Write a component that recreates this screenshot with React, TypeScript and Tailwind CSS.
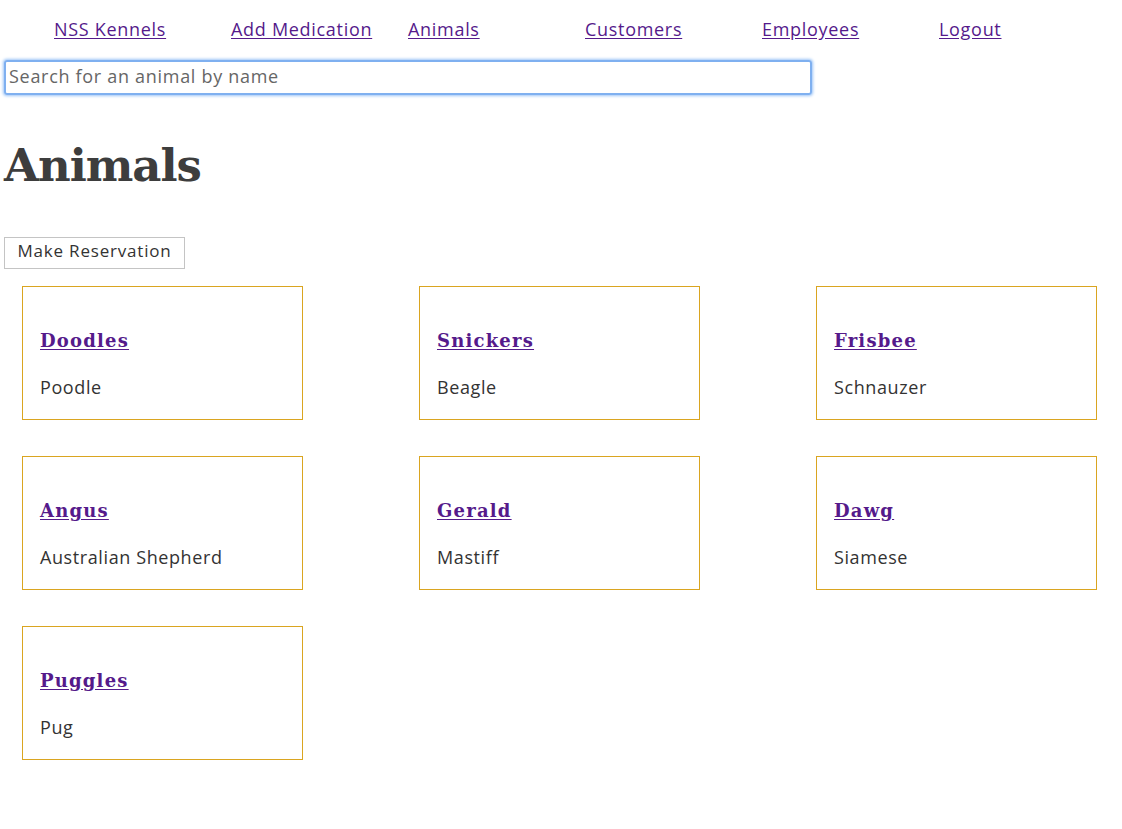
import React from "react";

const navLinks = ["NSS Kennels", "Add Medication", "Animals", "Customers", "Employees", "Logout"];
const animals = [
  ["Doodles", "Poodle"],
  ["Snickers", "Beagle"],
  ["Frisbee", "Schnauzer"],
  ["Angus", "Australian Shepherd"],
  ["Gerald", "Mastiff"],
  ["Dawg", "Siamese"],
  ["Puggles", "Pug"],
];

const body = { fontFamily: "'Open Sans', 'Noto Sans', sans-serif" };
const slab = { fontFamily: "'DejaVu Serif', 'Liberation Serif', serif" };

export default function App() {
  return (
    <div className="min-h-[829px] w-[1122px] bg-white text-[#3d3d3d]" style={body}>
      <nav className="flex pl-[54px] pt-[17px]">
        {navLinks.map((l) => (
          <div key={l} className="w-[177px]">
            <a href="#" className="text-[18px] leading-[24px] tracking-[0.7px] text-[#551a8b] underline underline-offset-2">
              {l}
            </a>
          </div>
        ))}
      </nav>
      <div className="pl-[4px] pt-[18px]">
        <input
          className="block h-[35px] w-[808px] rounded-[3px] border-2 border-[#7fb0f0] px-[3px] pb-[4px] text-[18px] tracking-[0.7px] text-[#555] shadow-[0_0_3px_1px_#9cc4f7] outline-none placeholder:text-[#666]"
          placeholder="Search for an animal by name"
          style={body}
        />
      </div>
      <h1 className="mt-[43px] pl-[4px] text-[45px] font-bold leading-[56px] tracking-[-1px] text-[#3d3d3d]" style={slab}>
        Animals
      </h1>
      <div className="pl-[4px] pt-[43px]">
        <button className="h-[32px] w-[181px] border border-[#c4c4c4] bg-white pb-[4px] text-[17px] tracking-[0.8px] text-[#333]" style={body}>
          Make Reservation
        </button>
      </div>
      <div className="ml-[22px] mt-[17px] grid grid-cols-[281px_281px_281px] gap-x-[116px] gap-y-[36px]">
        {animals.map(([n, b]) => (
          <div key={n} className="h-[134px] border border-[#daa520] pl-[17px] pt-[41px]">
            <a href="#" className="text-[18px] font-bold leading-[26px] tracking-[1.2px] text-[#551a8b] underline underline-offset-2" style={slab}>
              {n}
            </a>
            <div className="mt-[21px] text-[18px] leading-[24px] tracking-[0.6px] text-[#333]">{b}</div>
          </div>
        ))}
      </div>
    </div>
  );
}
